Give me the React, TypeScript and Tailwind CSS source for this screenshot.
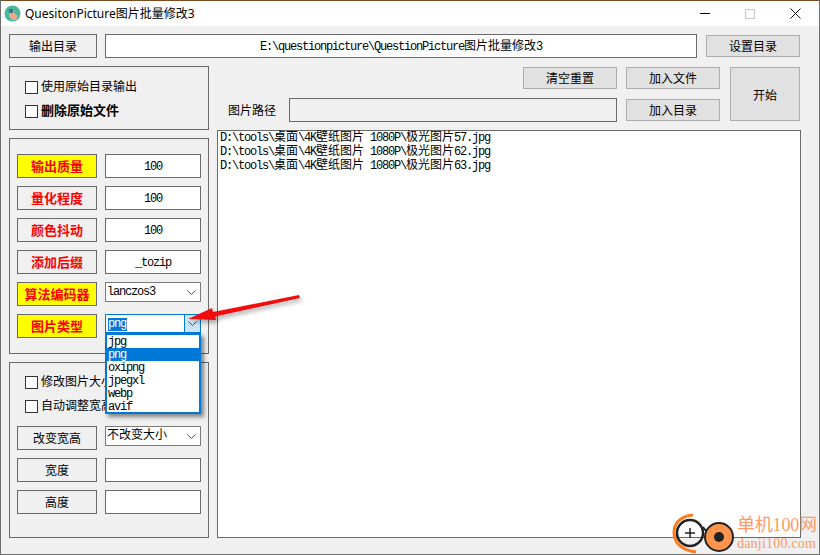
import React from 'react';

const UI_FONT = "font-['Noto_Sans_CJK_SC','Noto_Sans',sans-serif]";
const MONO_FONT = "font-['Liberation_Mono','Noto_Sans_CJK_SC',monospace]";

// SimSun style mix: half width latin, full width CJK
const Mono: React.FC<{ text: string }> = ({ text }) => (
  <span className="whitespace-pre leading-[12px]">
    {text.split(/([\u4e00-\u9fff]+)/).map((part, i) =>
      /[\u4e00-\u9fff]/.test(part) ? (
        <span key={i} className="text-[12px]">{part}</span>
      ) : (
        <span key={i} className="text-[12px] tracking-[-1.2px]">{part}</span>
      )
    )}
  </span>
);

const Label: React.FC<{ text: string; hot?: boolean; yellow?: boolean; wide?: boolean }> = ({ text, hot, yellow, wide }) => (
  <div
    className={`${wide ? 'w-[88px]' : 'w-20'} h-6 shrink-0 border border-[#6a6a6a] flex items-center justify-center pb-px ${
      yellow ? 'bg-[#ffff00]' : 'bg-[#f0f0f0]'
    } ${hot ? 'text-[#ff0000] font-bold text-[13px]' : 'text-black text-[12px]'}`}
  >
    {text}
  </div>
);

const Field: React.FC<{ value?: string }> = ({ value }) => (
  <div className={`w-24 h-6 border border-[#6a6a6a] bg-white flex items-center justify-center text-black ${MONO_FONT}`}>
    <Mono text={value ?? ''} />
  </div>
);

const Chevron: React.FC = () => (
  <svg width="9" height="5" viewBox="0 0 9 5" fill="none" stroke="#555555" strokeWidth="1">
    <path d="M0.5 0.5L4.5 4.5L8.5 0.5" />
  </svg>
);

const Combo: React.FC<{ value: string }> = ({ value }) => (
  <div className={`w-24 h-5 border border-[#7a7a7a] bg-white flex items-center justify-between pl-px pr-1 pb-0.5 ${MONO_FONT}`}>
    <Mono text={value} />
    <span className="pt-0.5 flex"><Chevron /></span>
  </div>
);

const Check: React.FC<{ text: string; bold?: boolean }> = ({ text, bold }) => (
  <div className={`flex items-center h-[14px] gap-[3px] whitespace-nowrap ${bold ? 'font-bold text-[13px]' : 'text-[12px]'}`}>
    <span className="w-[13px] h-[13px] border border-[#333333] bg-white shrink-0" />
    <span className={`leading-none ${bold ? 'pb-[3px]' : 'pb-[2px]'}`}>{text}</span>
  </div>
);

const SideButton: React.FC<{ text: string; className: string }> = ({ text, className }) => (
  <div className={`border border-[#adadad] bg-[#e1e1e1] flex items-center justify-center text-[12px] text-black ${className}`}>
    {text}
  </div>
);

const FILES = [
  'D:\\tools\\桌面\\4K壁纸图片 1080P\\极光图片57.jpg',
  'D:\\tools\\桌面\\4K壁纸图片 1080P\\极光图片62.jpg',
  'D:\\tools\\桌面\\4K壁纸图片 1080P\\极光图片63.jpg',
];

const OPTIONS = ['jpg', 'png', 'oxipng', 'jpegxl', 'webp', 'avif'];

function PathField() {
  return (
    <div className={`ml-2 w-[592px] h-6 border border-[#6a6a6a] bg-white flex items-center justify-center ${MONO_FONT}`}>
      <Mono text="E:\questionpicture\QuestionPicture图片批量修改3" />
    </div>
  );
}

const App: React.FC = () => {
  return (
    <div className={`relative w-[820px] h-[555px] overflow-hidden bg-[#f0f0f0] border-x border-b border-[#6f6f6f] text-black ${UI_FONT}`}>
      {/* title bar */}
      <div className="h-[26px] bg-white border-t border-t-[#7a4a20] flex items-center">
        <svg className="ml-[3px]" width="17" height="17" viewBox="0 0 17 17">
          <circle cx="8.5" cy="8.5" r="8" fill="#4cb89b" />
          <path d="M5 6L9 4L11 9L14 11L12 15H8L5 11Z" fill="#e9a88c" />
          <path d="M5 4H9V8H5Z" fill="#3f7284" />
        </svg>
        <span className="ml-[4px] text-[12px] leading-none font-['Noto_Sans','Noto_Sans_CJK_SC',sans-serif]">QuesitonPicture图片批量修改3</span>
        <div className="ml-auto flex items-center">
          <div className="w-[45px] flex justify-center"><div className="w-[10px] h-px bg-black" /></div>
          <div className="w-[45px] flex justify-center"><div className="w-[10px] h-[10px] border border-[#c8c8c8]" /></div>
          <div className="w-[47px] flex justify-center">
            <svg width="11" height="11" viewBox="0 0 11 11" stroke="#111111" strokeWidth="1">
              <path d="M0.5 0.5L10.5 10.5M10.5 0.5L0.5 10.5" />
            </svg>
          </div>
        </div>
      </div>

      <div className="pt-[8px] pl-2 pr-[18px]">
        {/* output dir row */}
        <div className="flex items-center h-6">
          <Label text="输出目录" wide />
          <PathField />
          <SideButton text="设置目录" className="ml-[9px] w-[94px] h-[22px] pb-px" />
        </div>

        <div className="flex gap-2 mt-2">
          {/* left column */}
          <div className="w-[200px] shrink-0 flex flex-col gap-2">
            <div className="h-[64px] border border-[#6a6a6a] pl-[15px] pt-[13px] flex flex-col gap-[10px]">
              <Check text="使用原始目录输出" />
              <Check text="删除原始文件" bold />
            </div>

            <div className="h-[216px] border border-[#6a6a6a] pl-[7px] pt-[15px] flex flex-col gap-2">
              <div className="flex gap-2"><Label text="输出质量" hot yellow /><Field value="100" /></div>
              <div className="flex gap-2"><Label text="量化程度" hot /><Field value="100" /></div>
              <div className="flex gap-2"><Label text="颜色抖动" hot /><Field value="100" /></div>
              <div className="flex gap-2"><Label text="添加后缀" hot /><Field value="_tozip" /></div>
              <div className="flex gap-2"><Label text="算法编码器" hot yellow /><Combo value="lanczos3" /></div>
              <div className="flex gap-2"><Label text="图片类型" hot yellow /></div>
            </div>

            <div className="h-[176px] border border-[#6a6a6a] pl-[7px] pt-[12px]">
              <div className="pl-2 flex flex-col gap-[10px]">
                <Check text="修改图片大小" />
                <Check text="自动调整宽高" />
              </div>
              <div className="mt-[13px] flex flex-col gap-2">
                <div className="flex gap-2"><Label text="改变宽高" /><Combo value="不改变大小" /></div>
                <div className="flex gap-2"><Label text="宽度" /><Field /></div>
                <div className="flex gap-2"><Label text="高度" /><Field /></div>
              </div>
            </div>
          </div>

          {/* right column */}
          <div className="flex-1 flex flex-col">
            <div className="h-[64px] flex">
              <div className="w-[400px] flex flex-col">
                <div className="flex justify-end pt-px">
                  <SideButton text="清空重置" className="w-[94px] h-[22px]" />
                </div>
                <div className="mt-[9px] flex items-center">
                  <span className="ml-[11px] w-[56px] text-[12px] leading-none">图片路径</span>
                  <div className="ml-[5px] w-[328px] h-6 border border-[#6a6a6a]" />
                </div>
              </div>
              <div className="ml-[9px] flex flex-col gap-[10px] pt-px">
                <SideButton text="加入文件" className="w-[94px] h-[22px]" />
                <SideButton text="加入目录" className="w-[94px] h-[22px]" />
              </div>
              <div className="ml-[10px] pt-px">
                <SideButton text="开始" className="w-[70px] h-[54px] pt-0.5" />
              </div>
            </div>
            <div className={`h-[408px] border border-[#6a6a6a] bg-white pl-[2px] ${MONO_FONT}`}>
              {FILES.map(f => (
                <div key={f} className="h-[14px] leading-[13px] whitespace-pre"><Mono text={f} /></div>
              ))}
            </div>
          </div>
        </div>
      </div>

      {/* open combo box and its list */}
      <div className={`absolute left-[104px] top-[314px] w-24 h-[19px] border border-[#0078d7] bg-white flex ${MONO_FONT}`}>
        <div className="flex-1 flex items-center pl-0.5 pt-px">
          <span className="bg-[#0078d7] text-white text-[12px] tracking-[-1.2px] leading-[13px] pr-px">png</span>
        </div>
        <div className="w-4 border-l border-[#0078d7] bg-[#cce4f7] flex items-center justify-center"><Chevron /></div>
      </div>
      <div className={`absolute left-[104px] top-[333px] w-24 h-[81px] border-2 border-[#0078d7] bg-white shadow-[3px_3px_4px_rgba(0,0,0,0.45)] ${MONO_FONT}`}>
        {OPTIONS.map(o => (
          <div
            key={o}
            className={`h-[13px] leading-[15px] pl-px text-[12px] tracking-[-1.2px] ${o === 'png' ? 'bg-[#0078d7] text-white' : 'text-black'}`}
          >
            {o}
          </div>
        ))}
      </div>

      {/* red arrow annotation */}
      <svg className="absolute left-0 top-0 pointer-events-none" width="820" height="555" viewBox="0 0 820 555">
        <defs>
          <filter id="arrowShadow" x="-20%" y="-40%" width="140%" height="200%">
            <feDropShadow dx="2" dy="3" stdDeviation="2" floodColor="#000000" floodOpacity="0.3" />
          </filter>
        </defs>
        <path d="M187 319L211 308L212 312L298 295L299 298L214 316.5L215 320Z" fill="#f01010" filter="url(#arrowShadow)" />
      </svg>

      {/* watermark */}
      <div className="absolute left-[671px] top-[512px]">
        <svg width="66" height="43" viewBox="0 0 66 43" fill="none">
          <path d="M21 3C8 4 1.5 12 2 21C2.5 31 10 38 24 40" stroke="#ff7a1a" strokeWidth="3" />
          <circle cx="18" cy="21" r="13" stroke="#222222" strokeWidth="2.5" />
          <path d="M13 21H23M18 16V26" stroke="#222222" strokeWidth="1.5" />
          <path d="M31 15L34 19" stroke="#222222" strokeWidth="2" />
          <circle cx="47" cy="25" r="14" fill="#ff944d" stroke="#222222" strokeWidth="2" />
          <circle cx="47" cy="25" r="5" fill="#222222" />
        </svg>
      </div>
      <div className="absolute left-[736px] top-[516px] text-[#ff9a63] font-['Liberation_Serif','Noto_Sans_CJK_SC',serif] leading-none">
        <div className="text-[18px] tracking-[-0.2px] whitespace-nowrap">单机100网</div>
        <div className="mt-[3px] text-[14px] tracking-[0.2px] whitespace-nowrap">danji100.com</div>
      </div>
    </div>
  );
};

export default App;
